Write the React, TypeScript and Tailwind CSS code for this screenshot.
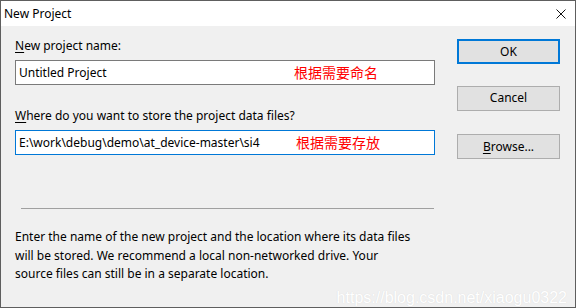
import React from "react";

const font = { fontFamily: '"Noto Sans", "Noto Sans CJK SC", sans-serif' };

const Btn = ({ children, primary }: { children: React.ReactNode; primary?: boolean }) => (
  <button
    className={
      primary
        ? "w-[103px] h-[25px] bg-[#e1e1e1] border-2 border-[#0078d7] text-[12px] text-black"
        : "w-[103px] h-[25px] bg-[#e1e1e1] border border-[#adadad] text-[12px] text-black"
    }
  >
    {children}
  </button>
);

export default function App() {
  return (
    <div className="w-[576px] h-[308px] border border-[#5e5e5e] bg-[#f0f0f0] flex flex-col relative overflow-hidden" style={font}>
      <div className="h-[25px] bg-white flex items-center justify-between pl-[3px] pr-[9px] text-[12px] text-black">
        <span>New Project</span>
        <svg width="10" height="10" viewBox="0 0 10 10" className="mt-[1px]">
          <path d="M0.5 0.5 L9.5 9.5 M9.5 0.5 L0.5 9.5" stroke="#111" strokeWidth="1" />
        </svg>
      </div>

      <div className="flex pl-[14px] gap-[22px]">
        <div className="w-[420px] flex flex-col text-[12px] text-black">
          <div className="mt-[10px] h-[20px] leading-[20px]">
            <span className="underline underline-offset-2">N</span>ew project name:
          </div>
          <div className="relative mt-[4px] h-[25px] bg-white border border-[#7a7a7a] pl-[3px] leading-[23px]">
            Untitled Project
            <span className="absolute left-[278px] top-0 text-[14px] text-[#ff0000]">根据需要命名</span>
          </div>
          <div className="mt-[21px] h-[20px] leading-[20px]">
            <span className="underline underline-offset-2">W</span>here do you want to store the project data files?
          </div>
          <div className="relative mt-[4px] h-[25px] bg-white border border-[#0078d7] pl-[3px] leading-[23px]">
            E:\work\debug\demo\at_device-master\si4
            <span className="absolute left-[280px] top-0 text-[14px] text-[#ff0000]">根据需要存放</span>
          </div>
          <div className="mt-[53px] ml-[6px] w-[413px] border-t border-[#a0a0a0]" />
          <p className="mt-[19px] whitespace-nowrap leading-[18.5px]">
            Enter the name of the new project and the location where its data files
            <br />
            will be stored. We recommend a local non-networked drive. Your
            <br />
            source files can still be in a separate location.
          </p>
        </div>

        <div className="flex flex-col mt-[13px]">
          <Btn primary>OK</Btn>
          <div className="mt-[20px]">
            <Btn>Cancel</Btn>
          </div>
          <div className="mt-[22px]">
            <Btn>
              <span className="underline underline-offset-2">B</span>rowse...
            </Btn>
          </div>
        </div>
      </div>

      <div
        className="absolute right-[8px] bottom-[0px] text-[16px] text-white leading-[18px]"
        style={{ fontFamily: '"Liberation Sans", Arial, sans-serif', textShadow: "0 0 1px #d6d6d6" }}
      >
        https://blog.csdn.net/xiaogu0322
      </div>
    </div>
  );
}
